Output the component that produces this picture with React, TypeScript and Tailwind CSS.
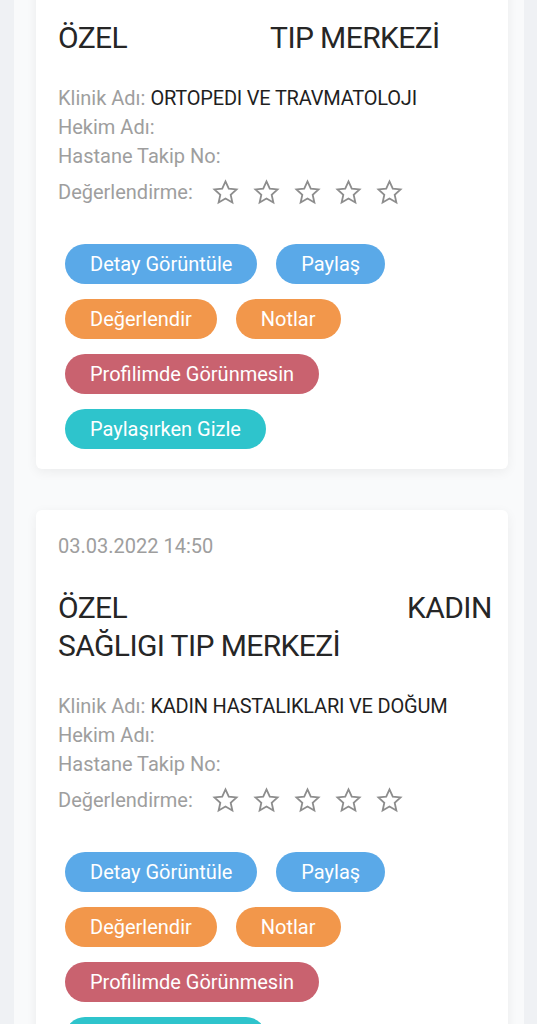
import React from "react";

const font = { fontFamily: "Roboto, 'Noto Sans', sans-serif" };

function Star() {
  return (
    <svg width="27" height="27" viewBox="0 0 24 24" fill="none" stroke="#8d8d8d" strokeWidth="1.6" strokeLinejoin="miter">
      <polygon points="12,2.2 14.9,8.6 21.8,9.3 16.6,14 18.1,20.9 12,17.4 5.9,20.9 7.4,14 2.2,9.3 9.1,8.6" />
    </svg>
  );
}

function Btn({ label, color }: { label: string; color: string }) {
  return (
    <div className={`h-10 px-[25px] rounded-full flex items-center text-white text-[20px] ${color}`}>
      {label}
    </div>
  );
}

function Card({
  title,
  clinic,
}: {
  title: React.ReactNode;
  clinic: string;
}) {
  return (
    <div className="bg-white rounded-md shadow-[0_3px_12px_rgba(0,0,0,0.06)] pt-[22px] pb-5 pl-[22px] pr-3">
      <div className="text-[20px] leading-[29px] text-[#9e9e9e]">03.03.2022 14:50</div>
      <div className="mt-7 text-[30px] leading-[38px] tracking-[-0.6px] text-[#262626] whitespace-nowrap">{title}</div>
      <div className="mt-[27px] text-[20px] leading-[29px] text-[#9e9e9e]">
        <div>
          Klinik Adı: <span className="text-[#1f1f1f] tracking-[-0.2px]">{clinic}</span>
        </div>
        <div>Hekim Adı:</div>
        <div>Hastane Takip No:</div>
        <div className="flex items-center h-9 mt-[3px]">
          <span>Değerlendirme:</span>
          <div className="flex gap-[14px] ml-[19px]">
            <Star />
            <Star />
            <Star />
            <Star />
            <Star />
          </div>
        </div>
      </div>
      <div className="mt-[34px] pl-[7px] flex flex-col gap-[15px]">
        <div className="flex gap-[19px]">
          <Btn label="Detay Görüntüle" color="bg-[#5aa9e8]" />
          <Btn label="Paylaş" color="bg-[#5aa9e8]" />
        </div>
        <div className="flex gap-[19px]">
          <Btn label="Değerlendir" color="bg-[#f2974b]" />
          <Btn label="Notlar" color="bg-[#f2974b]" />
        </div>
        <div className="flex">
          <Btn label="Profilimde Görünmesin" color="bg-[#c9626f]" />
        </div>
        <div className="flex">
          <Btn label="Paylaşırken Gizle" color="bg-[#2ec4cc]" />
        </div>
      </div>
    </div>
  );
}

export default function App() {
  return (
    <div className="w-[537px] h-[1024px] overflow-hidden bg-[#eff1f4] pl-[14px] pr-[13px]" style={font}>
      <div className="bg-[#f9fafb] h-[1200px] -mt-[60px] pl-[22px] pr-[16px]">
        <div className="flex flex-col gap-[41px]">
          <Card
            clinic="ORTOPEDI VE TRAVMATOLOJI"
            title={
              <>
                ÖZEL<span className="inline-block w-[143px]" />TIP MERKEZİ
              </>
            }
          />
          <Card
            clinic="KADIN HASTALIKLARI VE DOĞUM"
            title={
              <>
                ÖZEL<span className="inline-block w-[280px]" />KADIN
                <br />
                SAĞLIGI TIP MERKEZİ
              </>
            }
          />
        </div>
      </div>
    </div>
  );
}
